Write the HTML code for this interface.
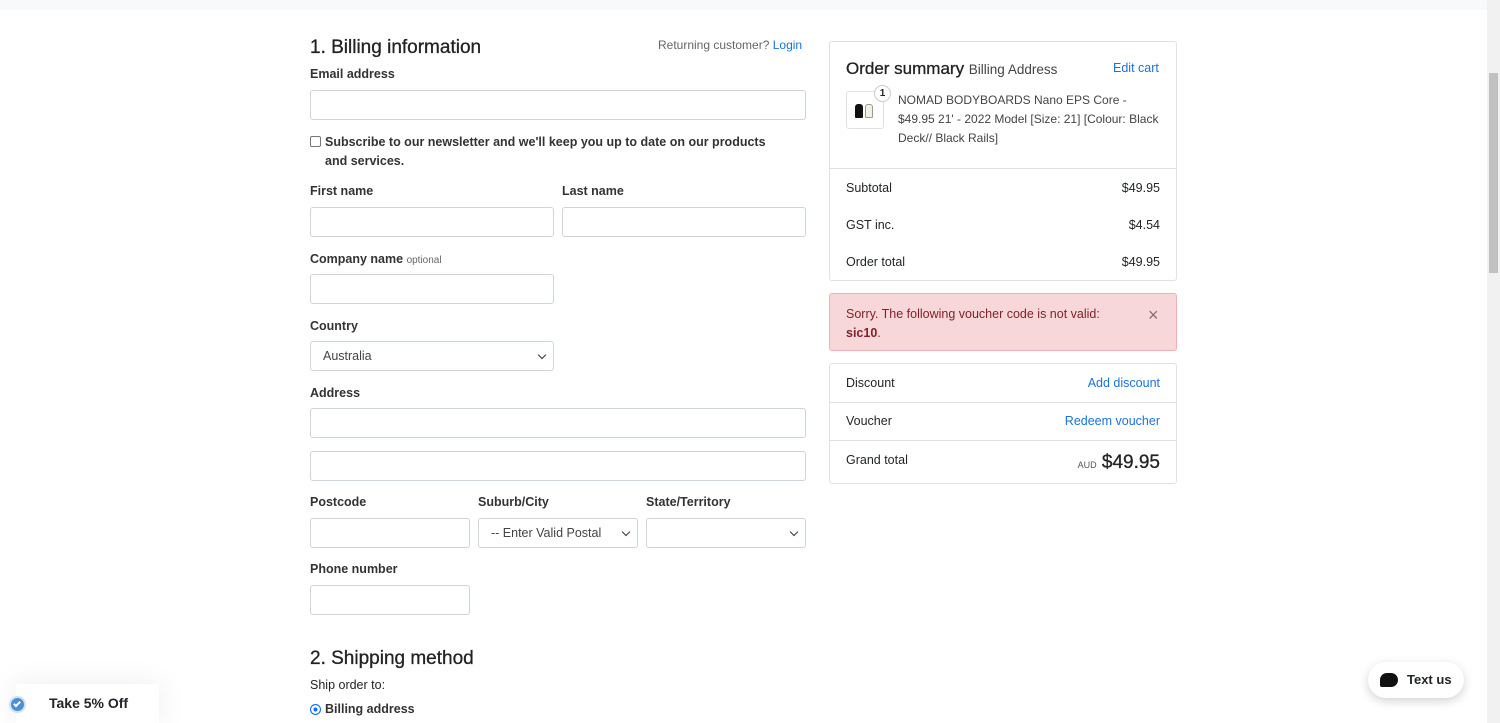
<!DOCTYPE html>
<html><head><meta charset="utf-8"><style>
*{box-sizing:border-box}
body{margin:0;width:1500px;height:723px;overflow:hidden;background:#fff;font-family:"Liberation Sans",Arial,sans-serif;color:#212529;font-size:12.5px;position:relative}
.top{position:absolute;left:0;top:0;width:1487px;height:10px;background:#f8f9fa}
.sb{position:absolute;right:0;top:0;width:13px;height:723px;background:#f1f1f1}
.thumb{position:absolute;right:2px;top:73px;width:9px;height:200px;background:#c1c1c1}
.a{position:absolute;white-space:nowrap}
.lbl{font-weight:bold;font-size:12.5px;color:#333}
.in{position:absolute;border:1px solid #ced4da;border-radius:3px;height:30px;background:#fff}
.sel{padding-left:12px;line-height:28px;font-size:12.5px;color:#444}
.sel:after{content:"";position:absolute;right:8px;top:10px;width:5px;height:5px;border-right:1.5px solid #333;border-bottom:1.5px solid #333;transform:rotate(45deg)}
h2{margin:0;font-weight:normal;font-size:19px;position:absolute;white-space:nowrap;color:#222;-webkit-text-stroke:0.3px #222}
.box{position:absolute;border:1px solid #dee2e6;border-radius:3px;background:#fff}
.blue{color:#1a73d9}
.row{position:absolute;left:0;right:0;border-top:1px solid #dee2e6}
</style></head><body>
<div class="top"></div>
<div class="sb"><div class="thumb"></div></div>

<h2 style="left:310px;top:37px">1. Billing information</h2>
<div class="a" style="left:658px;top:38px;color:#666;font-size:12px">Returning customer? <span class="blue">Login</span></div>
<div class="a lbl" style="left:310px;top:67px">Email address</div>
<div class="in" style="left:310px;top:90px;width:496px"></div>
<div class="a" style="left:310px;top:136px;width:11px;height:11px;border:1px solid #777;border-radius:2px"></div>
<div class="a lbl" style="left:325px;top:133px;line-height:19px;white-space:normal;width:460px">Subscribe to our newsletter and we'll keep you up to date on our products and services.</div>
<div class="a lbl" style="left:310px;top:184px">First name</div>
<div class="a lbl" style="left:562px;top:184px">Last name</div>
<div class="in" style="left:310px;top:207px;width:244px"></div>
<div class="in" style="left:562px;top:207px;width:244px"></div>
<div class="a lbl" style="left:310px;top:252px">Company name <span style="font-weight:normal;font-size:10px;color:#666">optional</span></div>
<div class="in" style="left:310px;top:274px;width:244px"></div>
<div class="a lbl" style="left:310px;top:319px">Country</div>
<div class="in sel" style="left:310px;top:341px;width:244px">Australia</div>
<div class="a lbl" style="left:310px;top:386px">Address</div>
<div class="in" style="left:310px;top:408px;width:496px"></div>
<div class="in" style="left:310px;top:451px;width:496px"></div>
<div class="a lbl" style="left:310px;top:495px">Postcode</div>
<div class="a lbl" style="left:478px;top:495px">Suburb/City</div>
<div class="a lbl" style="left:646px;top:495px">State/Territory</div>
<div class="in" style="left:310px;top:518px;width:160px"></div>
<div class="in sel" style="left:478px;top:518px;width:160px;overflow:hidden;padding-right:20px">-- Enter Valid Postal Co</div>
<div class="in sel" style="left:646px;top:518px;width:160px"></div>
<div class="a lbl" style="left:310px;top:562px">Phone number</div>
<div class="in" style="left:310px;top:585px;width:160px"></div>
<h2 style="left:310px;top:648px">2. Shipping method</h2>
<div class="a" style="left:310px;top:678px">Ship order to:</div>
<div class="a" style="left:310px;top:704px;width:11px;height:11px;border-radius:50%;background:#0d6efd;box-shadow:inset 0 0 0 2.5px #fff;border:1px solid #0d6efd"></div>
<div class="a lbl" style="left:325px;top:702px">Billing address</div>

<div class="box" style="left:829px;top:41px;width:348px;height:240px">
<div class="a" style="left:16px;top:17px;font-size:17px;color:#222;-webkit-text-stroke:0.3px #222">Order summary <span style="font-size:13.5px;color:#444;-webkit-text-stroke:0">Billing Address</span></div>
<div class="a blue" style="left:283px;top:19px">Edit cart</div>
<div class="a" style="left:16px;top:49px;width:38px;height:38px;border:1px solid #dee2e6;border-radius:3px">
<div class="a" style="left:8px;top:12px;width:8px;height:14px;background:#111;border-radius:3px 3px 1px 1px"></div>
<div class="a" style="left:18px;top:12px;width:8px;height:14px;background:#f3f0e0;border:1px solid #999;border-radius:3px 3px 1px 1px"></div></div>
<div class="a" style="left:44px;top:43px;width:17px;height:17px;border-radius:50%;border:1px solid #ccc;background:#fff;font-size:10px;font-weight:bold;text-align:center;line-height:15px">1</div>
<div class="a" style="left:68px;top:49px;line-height:19px;white-space:normal;width:268px;color:#444;font-size:12px">NOMAD BODYBOARDS Nano EPS Core - $49.95 21' - 2022 Model [Size: 21] [Colour: Black Deck// Black Rails]</div>
<div class="row" style="top:126px"></div>
<div class="a" style="left:16px;top:139px">Subtotal</div><div class="a" style="right:16px;top:139px">$49.95</div>
<div class="a" style="left:16px;top:176px">GST inc.</div><div class="a" style="right:16px;top:176px">$4.54</div>
<div class="a" style="left:16px;top:213px">Order total</div><div class="a" style="right:16px;top:213px">$49.95</div>
</div>

<div class="box" style="left:829px;top:293px;width:348px;height:58px;background:#f8d7da;border-color:#f1b0b7;color:#842029">
<div class="a" style="left:16px;top:11px;line-height:19px">Sorry. The following voucher code is not valid:<br><b>sic10</b>.</div>
<div class="a" style="left:318px;top:11px;font-size:18px;color:#8a6d70">×</div>
</div>

<div class="box" style="left:829px;top:363px;width:348px;height:121px">
<div class="a" style="left:16px;top:12px">Discount</div><div class="a blue" style="right:16px;top:12px">Add discount</div>
<div class="row" style="top:38px"></div>
<div class="a" style="left:16px;top:50px">Voucher</div><div class="a blue" style="right:16px;top:50px">Redeem voucher</div>
<div class="row" style="top:76px"></div>
<div class="a" style="left:16px;top:89px">Grand total</div>
<div class="a" style="right:16px;top:88px;font-size:19px;-webkit-text-stroke:0.3px #222"><span style="font-size:9px;color:#555;-webkit-text-stroke:0">AUD</span> $49.95</div>
</div>

<div class="a" style="left:16px;top:684px;width:143px;height:39px;background:#fff;box-shadow:0 0 30px rgba(0,0,0,.08)">
<div class="a" style="left:33px;top:11px;font-weight:bold;font-size:14px">Take 5% Off</div></div>
<div class="a" style="left:9px;top:696px;width:17px;height:17px;border-radius:50%;background:#4a8fd8;border:2px solid #cfe2f7"><div class="a" style="left:4px;top:2px;width:4px;height:7px;border-right:2px solid #fff;border-bottom:2px solid #fff;transform:rotate(45deg)"></div></div>

<div class="a" style="left:1368px;top:662px;width:96px;height:36px;border-radius:18px;background:#fff;box-shadow:0 3px 10px rgba(0,0,0,.18)">
<div class="a" style="left:12px;top:11px;width:18px;height:14px;background:#111;border-radius:7px 7px 7px 2px"></div>
<div class="a" style="left:39px;top:10px;font-weight:bold;font-size:13px">Text us</div></div>
</body></html>
